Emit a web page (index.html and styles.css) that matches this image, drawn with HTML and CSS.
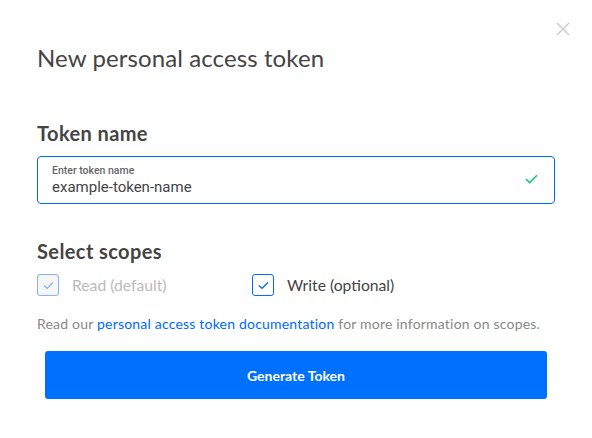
FILE: index.html
```html
<!DOCTYPE html>
<html>
<head>
<meta charset="utf-8">
<link rel="stylesheet" href="styles.css">
</head>
<body>
<div class="modal">
  <button class="close" aria-label="Close">
    <svg width="14" height="14" viewBox="0 0 14 14"><path d="M1 1L13 13M13 1L1 13" stroke="#c8c8c8" stroke-width="1.3" fill="none"/></svg>
  </button>
  <h1 class="title">New personal access token</h1>
  <h2 class="section">Token name</h2>
  <div class="field">
    <div class="field-text">
      <span class="field-label">Enter token name</span>
      <span class="field-value">example-token-name</span>
    </div>
    <svg class="ok" width="13" height="10" viewBox="0 0 13 10"><path d="M1 5.2L4.6 8.6L12 1.2" stroke="#15cd72" stroke-width="1.6" fill="none"/></svg>
  </div>
  <h2 class="section scopes">Select scopes</h2>
  <div class="checks">
    <label class="check disabled">
      <span class="box"><svg width="11" height="9" viewBox="0 0 11 9"><path d="M1 4.6L4 7.4L10 1.4" stroke="currentColor" stroke-width="1.4" fill="none"/></svg></span>
      <span>Read (default)</span>
    </label>
    <label class="check">
      <span class="box"><svg width="11" height="9" viewBox="0 0 11 9"><path d="M1 4.6L4 7.4L10 1.4" stroke="currentColor" stroke-width="1.4" fill="none"/></svg></span>
      <span>Write (optional)</span>
    </label>
  </div>
  <p class="help">Read our <a href="#">personal access token documentation</a> for more information on scopes.</p>
  <button class="primary">Generate Token</button>
</div>
</body>
</html>
```
FILE: styles.css
```css
* { box-sizing: border-box; }
html, body { margin: 0; padding: 0; background: #fff; }
body { font-family: Lato, "Liberation Sans", sans-serif; color: #444; }
.modal { position: relative; width: 592px; height: 438px; padding: 40px 37px 0 37px; }
.close { position: absolute; top: 22px; right: 22px; border: 0; background: none; padding: 0; width: 14px; height: 14px; display: block; }
.close svg { display: block; }
.title { margin: 0; font-size: 24px; font-weight: 400; line-height: 36px; color: #444; letter-spacing: 0.1px; }
.section { margin: 45px 0 0; font-size: 20px; font-weight: 700; line-height: 24px; color: #444; letter-spacing: 0.4px; }
.field { margin-top: 11px; height: 48px; border: 1px solid #0069ff; border-radius: 4px; display: flex; align-items: center; padding: 0 14px 0 14px; }
.field-text { flex: 1; display: flex; flex-direction: column; padding-top: 1px; font-family: Roboto, "Liberation Sans", sans-serif; }
.field-label { font-size: 10.5px; font-weight: 500; color: #666; line-height: 13px; }
.field-value { font-size: 15px; color: #444; line-height: 20px; }
.ok { margin-top: -2px; margin-right: 2px; }
.scopes { margin-top: 35px; }
.checks { display: flex; margin-top: 11px; height: 22px; }
.check { display: flex; align-items: center; font-size: 15.7px; color: #444; }
.check:first-child { width: 215px; }
.box { width: 22px; height: 22px; border: 1px solid #0069ff; border-radius: 3px; display: flex; align-items: center; justify-content: center; color: #0069ff; margin-right: 13px; flex: none; }
.disabled { color: #bbb; }
.disabled .box { border-color: #80b4ff; background: #f6f6f6; color: #80b4ff; }
.help { margin: 19px 0 0; font-size: 14px; color: #888; line-height: 18px; letter-spacing: 0.2px; }
.help a { color: #0069ff; text-decoration: none; }
.primary { display: block; margin: 18px 0 0 8px; width: 502px; height: 48px; border: 0; border-radius: 3px; background: #0071fe; color: #fff; font-family: Lato, "Liberation Sans", sans-serif; font-weight: 700; font-size: 14px; }
```
